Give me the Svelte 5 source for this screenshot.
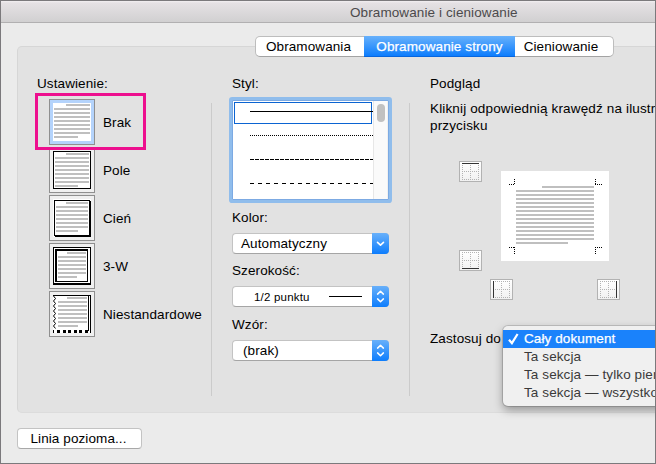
<script lang="ts">
  type Preset = {
    id: string;
    label: string;
    first: number;
    left: number;
    right: number;
    last: number;
    top: number;
    rows: number;
  };

  const presets: Preset[] = [
    { id: 'none', label: 'Brak', first: 13, left: 1, right: 37, last: 25, top: 1, rows: 9 },
    { id: 'box', label: 'Pole', first: 13, left: 2, right: 36, last: 25, top: 2, rows: 9 },
    { id: 'shadow', label: 'Cień', first: 13, left: 3, right: 35, last: 25, top: 3, rows: 8 },
    { id: 'threed', label: '3-W', first: 14, left: 5, right: 33, last: 24, top: 5, rows: 7 },
    { id: 'custom', label: 'Niestandardowe', first: 14, left: 5, right: 34, last: 25, top: 2, rows: 8 },
  ];

  const tabs = ['Obramowania', 'Obramowanie strony', 'Cieniowanie'];
  const strokes = ['none', '1 1', '4 1', '4 4'];
  const scopes = ['Cały dokument', 'Ta sekcja', 'Ta sekcja — tylko pier', 'Ta sekcja — wszystko'];

  let preset = $state('none');
  let tab = $state(1);
  let stroke = $state(0);
  let scope = $state(0);

  // text rows of a miniature page, 2px thick on a 4px pitch
  function textRows(p: Omit<Preset, 'id' | 'label'>) {
    return Array.from({ length: p.rows }, (_, i) => {
      const x = i === 0 ? p.first : p.left;
      const end = i === p.rows - 1 ? p.last : p.right;
      return { x, y: p.top + i * 4, w: end - x };
    });
  }

  const pageRows = textRows({ first: 41, left: 15, right: 93, last: 67, top: 15, rows: 15 });
</script>

{#snippet edge(side: string)}
  <button class="edge {side}" aria-label={side}>
    <svg width="17" height="17" viewBox="0 0 17 17" shape-rendering="crispEdges">
      <path d="M0 .5H17M0 8.5H17M0 16.5H17M.5 0V17M8.5 0V17M16.5 0V17" stroke="#b3b3b3" stroke-dasharray="1 1" />
      {#if side === 'top'}
        <path d="M0 .5H17" stroke="#333" />
      {:else if side === 'bottom'}
        <path d="M0 16.5H17" stroke="#333" />
      {:else if side === 'left'}
        <path d="M.5 0V17" stroke="#333" />
      {:else}
        <path d="M16.5 0V17" stroke="#333" />
      {/if}
    </svg>
  </button>
{/snippet}

{#snippet stepper()}
  <span class="knob">
    <svg width="17" height="21" viewBox="0 0 17 21" fill="none" stroke="#fff" stroke-width="1.5" stroke-linecap="round" stroke-linejoin="round">
      <path d="M5.6 8.1 8.5 5.3l2.9 2.8M5.6 12.9l2.9 2.8 2.9-2.8" />
    </svg>
  </span>
{/snippet}

<div class="window">
  <header>Obramowanie i cieniowanie</header>

  <nav>
    {#each tabs as name, i (name)}
      <button class:active={tab === i} onclick={() => (tab = i)}>{name}</button>
    {/each}
  </nav>

  <main>
    <section class="settings">
      <h3>Ustawienie:</h3>
      <ul>
        {#each presets as p (p.id)}
          <li>
            <button class="preset" class:chosen={preset === p.id} aria-label={p.label} onclick={() => (preset = p.id)}>
              <svg width="38" height="38" viewBox="0 0 38 38" shape-rendering="crispEdges">
                <rect width="38" height="38" fill="#fff" />
                {#each textRows(p) as r (r.y)}
                  <rect x={r.x} y={r.y} width={r.w} height="2" fill="#bfbfbf" />
                {/each}
                {#if p.id === 'box'}
                  <rect x=".5" y=".5" width="37" height="37" fill="none" stroke="#000" />
                {:else if p.id === 'shadow'}
                  <path d="M1 1H37V2H38V38H2V37H1ZM2 2V36H36V2Z" fill-rule="evenodd" />
                {:else if p.id === 'threed'}
                  <path d="M0 0H38V38H0ZM1 1V36H37V1Z" fill-rule="evenodd" />
                  <path d="M2 2H35V35H2ZM4 4V34H34V4Z" fill-rule="evenodd" />
                {:else if p.id === 'custom'}
                  <path d="M0 .5H38M35.5 0V36M37.5 0V37" stroke="#000" />
                  <path
                    d="M.5 1 2.5 3.5.5 6 2.5 8.5.5 11l2 2.5L.5 16l2 2.5L.5 21l2 2.5L.5 26l2 2.5L.5 31l2 2.5"
                    fill="none"
                    stroke="#000"
                    stroke-width="1"
                    shape-rendering="auto"
                  />
                  <path d="M0 36.5H38" stroke="#000" stroke-width="3" stroke-dasharray="1 3 3 3 3 2 3 3 3 2 3 3 3 2 3" />
                {/if}
              </svg>
            </button>
            <span>{p.label}</span>
          </li>
        {/each}
      </ul>
      <div class="marker"></div>
    </section>

    <div class="divider"></div>

    <section class="line">
      <h3>Styl:</h3>
      <div class="styles">
        <div class="rows">
          {#each strokes as dash, i (dash)}
            <button class="stroke" class:current={stroke === i} aria-label="Styl {i + 1}" onclick={() => (stroke = i)}>
              <svg width="123" height="1" viewBox="0 0 123 1" shape-rendering="crispEdges">
                <path d="M0 .5H123" stroke="#000" stroke-dasharray={dash} />
              </svg>
            </button>
          {/each}
        </div>
        <div class="scroll"><i></i></div>
      </div>

      <h3 class="color">Kolor:</h3>
      <div class="select">
        <span>Automatyczny</span>
        <span class="knob">
          <svg width="17" height="21" viewBox="0 0 17 21" fill="none" stroke="#fff" stroke-width="1.6" stroke-linecap="round" stroke-linejoin="round">
            <path d="M5.5 9.3l3 2.8 3-2.8" />
          </svg>
        </span>
      </div>

      <h3 class="width">Szerokość:</h3>
      <div class="select small">
        <span>1/2 punktu</span>
        <b></b>
        {@render stepper()}
      </div>

      <h3 class="art">Wzór:</h3>
      <div class="select pattern">
        <span>(brak)</span>
        {@render stepper()}
      </div>
    </section>

    <div class="divider"></div>

    <section class="preview">
      <h3>Podgląd</h3>
      <p>Kliknij odpowiednią krawędź na ilustr<br />przycisku</p>
      <div class="sheet">
        <div class="side">
          {@render edge('top')}
          {@render edge('bottom')}
        </div>
        <svg class="page" width="108" height="90" viewBox="0 0 108 90" shape-rendering="crispEdges">
          <rect width="108" height="90" fill="#fff" />
          {#each pageRows as r (r.y)}
            <rect x={r.x} y={r.y} width={r.w} height="2" fill="#bfbfbf" />
          {/each}
          <path
            d="M8 13.5H14M13.5 8V14M94 13.5H101M94.5 8V14M8 76.5H14M13.5 76V83M94 76.5H101M94.5 76V83"
            stroke="#000"
            stroke-dasharray="1 1"
          />
        </svg>
        <div class="under">
          {@render edge('left')}
          {@render edge('right')}
        </div>
      </div>
      <div class="apply">
        Zastosuj do
        <ul class="menu">
          {#each scopes as name, i (name)}
            <li class:picked={scope === i}>
              <span class="tick">
                {#if scope === i}
                  <svg width="11" height="12" viewBox="0 0 11 12" fill="none" stroke="#fff" stroke-width="2.2">
                    <path d="M1 6.8 3.9 10.2 9.6 1" />
                  </svg>
                {/if}
              </span>
              {name}
            </li>
          {/each}
        </ul>
      </div>
    </section>
  </main>

  <button class="rule">Linia pozioma...</button>
</div>

<style>
  :global(body) {
    margin: 0;
  }
  .window {
    box-sizing: border-box;
    width: 656px;
    height: 464px;
    overflow: hidden;
    border: 1px solid #7b797c;
    background: #ebebeb;
    color: #000;
    font: 13.5px/16px 'Liberation Sans', Arial, sans-serif;
    letter-spacing: 0.1px;
    white-space: nowrap;
  }
  button {
    padding: 0;
    font: inherit;
    letter-spacing: inherit;
    color: inherit;
  }
  h3,
  p,
  ul {
    margin: 0;
    padding: 0;
    font: inherit;
    list-style: none;
  }
  h3 {
    line-height: 18px;
  }
  svg {
    display: block;
  }
  header {
    box-sizing: border-box;
    height: 22px;
    padding: 4px 0 0 349px;
    border-bottom: 1px solid #b1b0b1;
    background: linear-gradient(#f2eff1 0, #e5e1e4 2px, #d1d0d1);
    color: #4c4a4c;
  }
  nav {
    position: relative;
    display: flex;
    box-sizing: border-box;
    width: 359px;
    height: 21px;
    margin: 13px 0 0 254px;
    border: 1px solid #bdbdbd;
    border-bottom-color: #a3a3a3;
    border-radius: 5px;
    background: #fff;
  }
  nav button {
    flex: 0 0 108px;
    padding-right: 3px;
    border: 0;
    background: none;
  }
  nav button:nth-child(2) {
    flex-basis: 151px;
    padding: 1px 0 0;
  }
  nav button:last-child {
    flex: 1;
    padding-right: 6px;
  }
  nav .active {
    margin: -1px 0;
    background: linear-gradient(#68b1fb, #0d7dfd);
    border-bottom: 1px solid #0866dd;
    color: #fff;
    -webkit-text-stroke: 0.25px #fff;
  }
  main {
    display: grid;
    grid-template-columns: 174px 1px 197px 1px 1fr;
    box-sizing: border-box;
    height: 367px;
    margin: -11px -20px 0 16px;
    padding: 28px 0 0 19px;
    border: 1px solid #d6d6d6;
    border-bottom-color: #dcdcdc;
    border-radius: 5px;
    background: #e2e2e2;
  }
  .divider {
    height: 293px;
    margin-top: 28px;
    background: #cbcbcb;
  }

  .settings {
    position: relative;
  }
  .settings ul {
    display: grid;
    gap: 2px;
    margin: 6px 0 0 12px;
  }
  .settings li {
    display: flex;
    align-items: center;
    gap: 8px;
  }
  .settings li span {
    padding-top: 2px;
  }
  .preset {
    box-sizing: border-box;
    flex: none;
    width: 46px;
    height: 46px;
    padding: 3px;
    border: 1px solid #8f8f8f;
    background: #f0f0f0;
  }
  .chosen {
    background: #b4d3fb;
  }
  .marker {
    position: absolute;
    top: 18px;
    left: -2px;
    box-sizing: border-box;
    width: 111px;
    height: 57px;
    border: 3px solid #ed0f8e;
    pointer-events: none;
  }

  .line {
    padding-left: 20px;
  }
  .styles {
    display: flex;
    box-sizing: border-box;
    width: 157px;
    height: 100px;
    margin-top: 7px;
    border: 1px solid #7caae3;
    border-radius: 1px;
    background: #fff;
    box-shadow: 0 0 0 3px #90bdec;
  }
  .rows {
    width: 140px;
    padding-top: 1px;
  }
  .stroke {
    display: flex;
    align-items: flex-start;
    box-sizing: border-box;
    width: 138px;
    height: 22px;
    margin: 0 0 2px 1px;
    padding: 8px 0 0 15px;
    border: 1px solid transparent;
    background: none;
  }
  .stroke svg {
    flex: none;
  }
  .current {
    border-color: #0b64d2;
  }
  .scroll {
    width: 13px;
    border-left: 1px solid #e7e7e7;
    border-right: 1px solid #f0f0f0;
    background: #fafafa;
  }
  .scroll i {
    display: block;
    width: 8px;
    height: 18px;
    margin: 3px 0 0 3px;
    border-radius: 4px;
    background: #c1c1c1;
  }
  .color {
    margin-top: 9px;
  }
  .width {
    margin-top: 8px;
  }
  .art {
    margin-top: 9px;
  }
  .select {
    display: flex;
    align-items: center;
    box-sizing: border-box;
    width: 157px;
    height: 21px;
    margin-top: 6px;
    padding-left: 8px;
    border: 1px solid #c3c3c3;
    border-bottom-color: #a5a5a5;
    border-radius: 4px;
    background: #fff;
  }
  .small {
    padding-left: 21px;
    font-size: 11.5px;
    letter-spacing: 0.2px;
  }
  .small b {
    width: 33px;
    height: 1px;
    margin-left: auto;
    background: #000;
  }
  .pattern {
    padding-left: 10px;
  }
  .knob {
    flex: none;
    width: 17px;
    height: 21px;
    margin: -1px -1px -1px auto;
    border-radius: 0 4px 4px 0;
    background: linear-gradient(#68b0fa, #0d7dfd);
  }
  .small .knob {
    margin-left: 10px;
  }

  .preview {
    padding-left: 20px;
  }
  .preview p {
    margin-top: 7px;
    line-height: 17px;
    letter-spacing: 0.15px;
  }
  .sheet {
    display: grid;
    grid-template-columns: 42px 108px;
    width: 150px;
    margin: 27px 0 0 29px;
  }
  .side {
    display: flex;
    flex-direction: column;
    justify-content: space-between;
    height: 110px;
  }
  .page {
    margin-top: 10px;
  }
  .under {
    grid-column: 1 / -1;
    display: flex;
    gap: 84px;
    margin: 8px -11px 0 31px;
  }
  .edge {
    box-sizing: border-box;
    flex: none;
    width: 23px;
    height: 21px;
    padding: 1px 2px;
    border: 1px solid #b2b2b2;
    background: linear-gradient(#fff, #f1f1f1);
  }
  .apply {
    position: relative;
    margin-top: 30px;
    line-height: 18px;
  }
  .menu {
    position: absolute;
    top: -4px;
    left: 73px;
    width: 320px;
    padding: 4px 0;
    border-radius: 5px;
    background: #f0f0f0;
    box-shadow:
      0 0 0 1px rgba(0, 0, 0, 0.14),
      0 4px 10px rgba(0, 0, 0, 0.35);
    color: #3a3a3a;
  }
  .menu li {
    display: flex;
    align-items: center;
    height: 18px;
    padding-left: 5px;
  }
  .tick {
    width: 16px;
  }
  .menu .picked {
    background: #1a82fb;
    color: #fff;
    -webkit-text-stroke: 0.25px #fff;
  }
  .rule {
    display: block;
    box-sizing: border-box;
    width: 125px;
    height: 21px;
    margin: 15px 0 0 16px;
    padding-right: 2px;
    border: 1px solid #c3c3c3;
    border-bottom-color: #a8a8a8;
    border-radius: 4px;
    background: #fff;
  }
</style>
